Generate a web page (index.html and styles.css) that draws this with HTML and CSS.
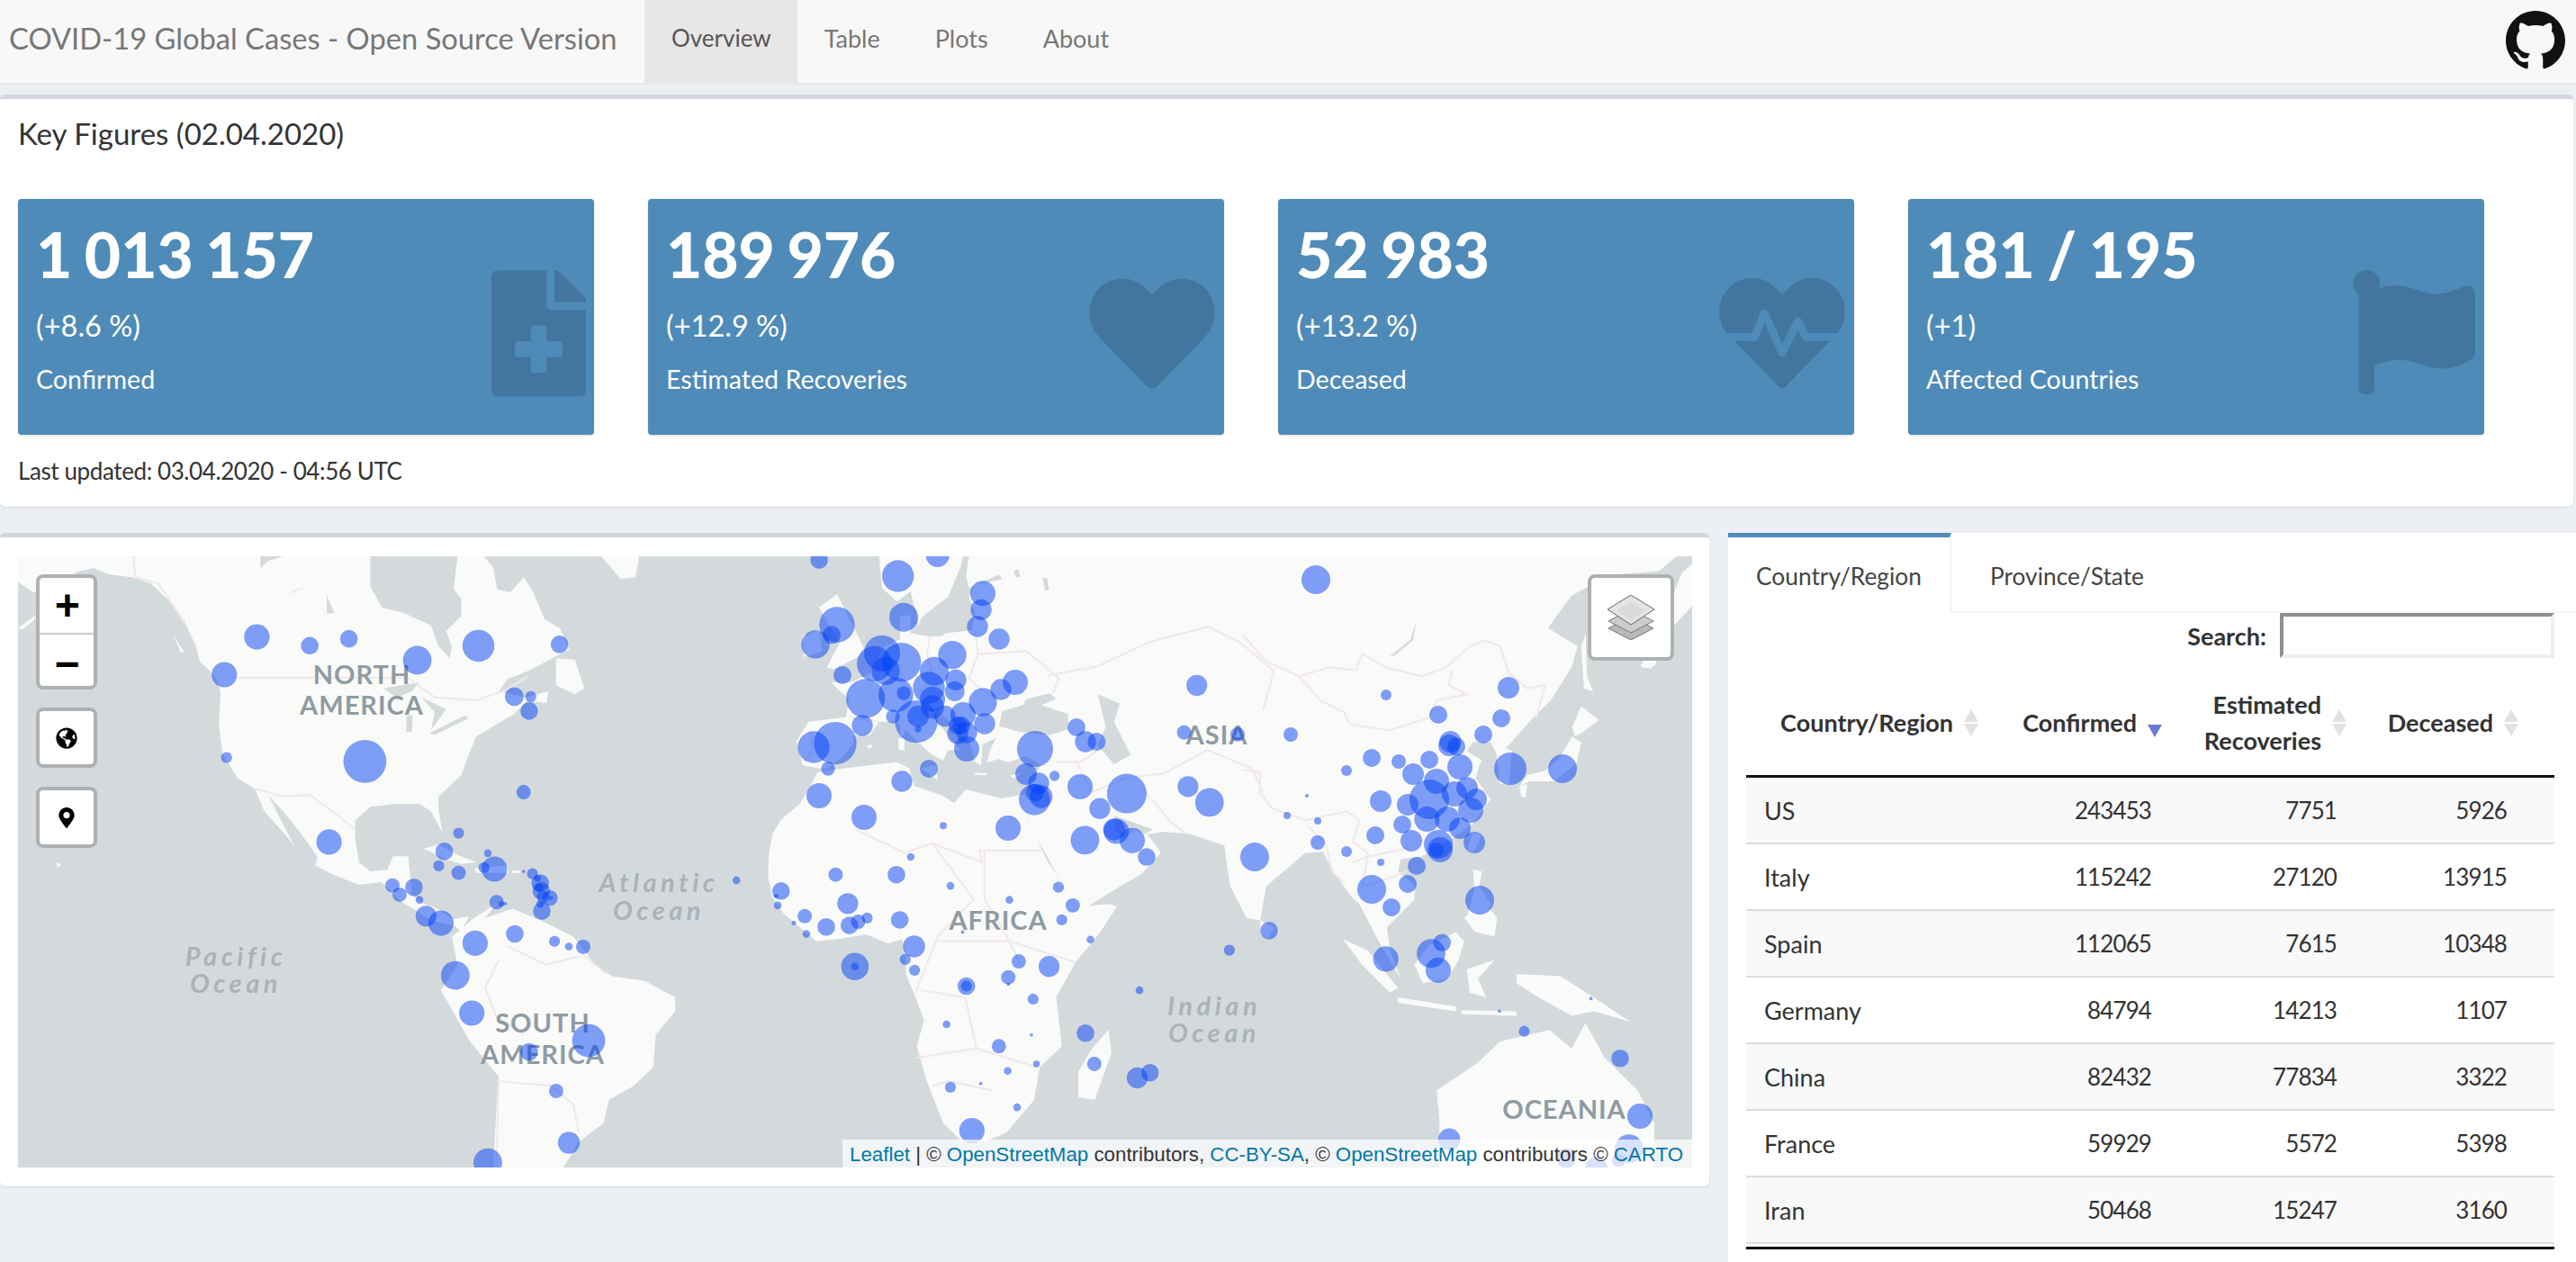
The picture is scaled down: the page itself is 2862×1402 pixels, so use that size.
FILE: index.html
```html
<!DOCTYPE html>
<html lang="en">
  <head>
    <meta charset="UTF-8" />
    <title>COVID-19 Global Cases</title>
    <link rel="stylesheet" href="styles.css">
  </head>

  <body>
    <nav class="navbar">
      <a class="brand">COVID-19 Global Cases - Open Source Version</a>
      <ul class="nav-links">
        <li class="active"><a>Overview</a></li>
        <li><a>Table</a></li>
        <li><a>Plots</a></li>
        <li><a>About</a></li>
      </ul>
      <a class="github">
        <svg viewBox="0 0 16 16"><path d="M8 0C3.58 0 0 3.58 0 8c0 3.54 2.29 6.53 5.47 7.59.4.07.55-.17.55-.38 0-.19-.01-.82-.01-1.49-2.01.37-2.53-.49-2.69-.94-.09-.23-.48-.94-.82-1.13-.28-.15-.68-.52-.01-.53.63-.01 1.08.58 1.23.82.72 1.21 1.87.87 2.33.66.07-.52.28-.87.51-1.07-1.78-.2-3.64-.89-3.64-3.95 0-.87.31-1.59.82-2.15-.08-.2-.36-1.02.08-2.12 0 0 .67-.21 2.2.82.64-.18 1.32-.27 2-.27.68 0 1.36.09 2 .27 1.53-1.04 2.2-.82 2.2-.82.44 1.1.16 1.92.08 2.12.51.56.82 1.27.82 2.15 0 3.07-1.87 3.75-3.65 3.95.29.25.54.73.54 1.48 0 1.07-.01 1.93-.01 2.2 0 .21.15.46.55.38A8.013 8.013 0 0016 8c0-4.42-3.58-8-8-8z"/></svg>
      </a>
    </nav>

    <main class="content">
      <section class="box key-box">
        <h3>Key Figures (02.04.2020)</h3>
        <div class="cards">
          <div class="card">
            <div class="value">1 013 157</div>
            <div class="change">(+8.6 %)</div>
            <div class="label">Confirmed</div>
            <svg class="card-icon icon-doc" viewBox="0 0 384 512"><path d="M377 105L279.1 7c-4.5-4.5-10.6-7-17-7H256v128h128v-6.1c0-6.3-2.5-12.4-7-16.9zm-153 31V0H24C10.7 0 0 10.7 0 24v464c0 13.3 10.7 24 24 24h336c13.3 0 24-10.7 24-24V160H248c-13.2 0-24-10.8-24-24zm64 160v48c0 4.4-3.6 8-8 8h-56v56c0 4.4-3.6 8-8 8h-48c-4.4 0-8-3.6-8-8v-56h-56c-4.4 0-8-3.6-8-8v-48c0-4.4 3.6-8 8-8h56v-56c0-4.4 3.6-8 8-8h48c4.4 0 8 3.6 8 8v56h56c4.4 0 8 3.6 8 8z"/></svg>
          </div>
          <div class="card">
            <div class="value">189 976</div>
            <div class="change">(+12.9 %)</div>
            <div class="label">Estimated Recoveries</div>
            <svg class="card-icon icon-heart" viewBox="0 26 512 456"><path d="M462.3 62.6C407.5 15.9 326 24.3 275.7 76.2L256 96.5l-19.7-20.3C186.1 24.3 104.5 15.9 49.7 62.6c-62.8 53.6-66.1 149.8-9.9 207.9l193.5 199.8c12.5 12.9 32.8 12.9 45.3 0l193.5-199.8c56.3-58.1 53-154.3-9.8-207.9z"/></svg>
          </div>
          <div class="card">
            <div class="value">52 983</div>
            <div class="change">(+13.2 %)</div>
            <div class="label">Deceased</div>
            <svg class="card-icon icon-heart" viewBox="0 32 512 448"><path d="M320.2 243.8l-49.7 99.4c-6 12.1-23.4 11.7-28.9-.6l-56.9-126.3-30 71.7H60.6l182.5 186.5c7.1 7.3 18.6 7.3 25.7 0L451.4 288H342.3l-22.1-44.2zM473.7 73.9l-2.4-2.5c-51.5-52.6-135.8-52.6-187.4 0L256 100l-27.9-28.5c-51.5-52.7-135.9-52.7-187.4 0l-2.4 2.4C-10.4 123.7-12.5 203 31 256h102.4l35.9-86.2c5.4-12.9 23.6-13.2 29.4-.4l58.2 129.3 49-97.9c5.9-11.8 22.7-11.8 28.6 0l27.6 55.2H481c43.5-53 41.4-132.3-7.3-182.1z"/></svg>
          </div>
          <div class="card">
            <div class="value">181 / 195</div>
            <div class="change">(+1)</div>
            <div class="label">Affected Countries</div>
            <svg class="card-icon icon-flag" viewBox="0 0 512 512"><path d="M349.565 98.783C295.978 98.783 251.721 64 184.348 64c-24.955 0-47.309 4.384-68.045 12.013a55.947 55.947 0 0 0 3.586-23.562C118.117 24.015 94.806 1.206 66.338.048 34.345-1.254 8 24.296 8 56c0 19.026 9.497 35.825 24 45.945V488c0 13.255 10.745 24 24 24h16c13.255 0 24-10.745 24-24v-94.4c28.311-12.064 63.582-22.122 114.435-22.122 53.588 0 97.844 34.783 165.217 34.783 48.169 0 86.667-16.294 122.505-40.858C506.84 359.452 512 349.571 512 339.045v-243.1c0-23.393-24.269-38.87-45.485-29.016-34.338 15.948-76.454 31.854-116.95 31.854z"/></svg>
          </div>
        </div>
        <p class="updated">Last updated: 03.04.2020 - 04:56 UTC</p>
      </section>

      <div class="main-row">
        <section class="box map-box">
          <div class="map">
            <svg class="map-svg" viewBox="20 618 1860 679">
              <rect class="sea" x="20" y="618" width="1860" height="679"/>

              <!-- north america, traced at x*.4209 y*.3333 -->
              <g transform="translate(20 618) scale(.4209 .3333)">
                <path class="land" d="M0 0V85L40 120L100 90L160 50L200 40L240 60L300 70L350 90L400 150L440 220L470 300L480 350L520 400L535 450L530 560L540 660L580 740L625 775L650 850L700 920L730 965L690 870L660 795L700 850L745 920L790 1000L785 1030L830 1060L900 1095L960 1085L1010 1150L1050 1180L1090 1215L1150 1230L1170 1250L1190 1200L1150 1210L1100 1170L1065 1155L1040 1130L1030 1000L990 1000L975 1045L930 1050L900 1020L890 940L890 880L930 835L1000 825L1060 825L1090 850L1120 920L1110 840L1110 800L1170 730L1190 660L1210 600L1250 570L1310 525L1345 480L1395 490L1400 450L1340 470L1270 450L1290 410L1350 380L1455 310L1430 240L1390 210L1360 120L1335 70L1300 120L1265 110L1255 40L1230 0Z"/>
                <path class="sea" d="M930 0L930 100L960 170L1020 190L1090 230L1110 300L1140 340L1145 300L1130 250L1170 200L1170 140L1150 110L1160 0Z"/>
                <path class="sea" d="M640 40L660 15L700 0H640Z"/>
                <path class="sea" d="M965 440L1060 420L1040 450L1000 470Z"/>
                <path class="sea" d="M1025 530H1042L1040 585H1025Z"/>
                <path class="sea" d="M1065 470L1130 510L1090 580L1100 520Z"/>
                <path class="sea" d="M1085 590L1180 530L1190 540L1100 595Z"/>
                <path class="sea" d="M700 130L760 100L735 115Z"/>
                <path class="sea" d="M815 130L835 190L815 190Z"/>
                <path class="land" d="M0 240L20 220L50 195L40 215L10 245Z"/>
                <path class="land" d="M410 265L440 320L430 320Z"/>
                <path class="land" d="M1420 340L1470 345L1495 440L1470 460L1420 430Z"/>
                <path class="land" d="M1070 975L1110 960L1160 995L1210 1020L1170 1025L1130 1010L1090 985Z"/>
                <path class="land" d="M1205 1040L1290 1030L1295 1055L1210 1055Z"/>
                <path class="land" d="M1305 1046L1325 1048L1325 1056L1305 1056Z"/>
                <path class="land" d="M100 1020L115 1028L105 1036Z"/>
                <path class="land" d="M1540 0H1640L1630 70L1590 75L1560 30Z"/>
                <path class="border" d="M580 405H1030L1100 470L1210 480L1290 445L1345 400"/>
                <path class="border" d="M625 775L700 800L770 795L830 850L890 910"/>
                <path class="border" d="M305 0L310 70L370 90L440 220"/>
              </g>

              <!-- south america, x*.6124 y*.5179 -->
              <g transform="translate(0 590) scale(.6124 .5179)">
                <path class="land" d="M820 870L860 830L900 800L880 830L930 810L990 840L1040 870L1080 930L1110 955L1170 965L1225 1000L1225 1030L1190 1080L1185 1150L1150 1190L1105 1220L1095 1270L1050 1310L1035 1340L1020 1370H895L900 1250L905 1170L880 1135L850 1090L800 985L830 930Z"/>
                <path class="border" d="M905 920L880 980L900 1040L950 1080"/>
                <path class="border" d="M900 1180L1000 1190L1040 1230L1050 1290"/>
                <path class="border" d="M905 1180L900 1370"/>
                <path class="border" d="M920 890L990 930L1060 910L1100 950"/>
              </g>

              <!-- europe, scandinavia and the mediterranean at 3x -->
              <g transform="translate(820 620) scale(.3333)">
                <path class="land" d="M265 700L215 690L195 610L235 545L360 530L370 470L310 415L375 415L440 385L480 300L540 270L540 195L575 190L575 250L640 260L900 260V700L600 720Z"/>
                <path class="land" d="M470 -10L480 100L530 145L575 110L605 235L640 220L650 170L710 130L760 -10Z"/>
              </g>

              <!-- africa and asia, x*.6124 y*.5179 -->
              <g transform="translate(950 590) scale(.6124 .5179)">
                <path class="land" d="M-68 517L-80 545L-100 585L-135 620L-150 650L-156 690L-158 740L-150 785L-130 820L-100 850L-70 880L-30 875L20 865L60 885L85 875L92 905L92 950L110 1000L125 1050L112 1105L130 1180L160 1270L195 1310L235 1310L275 1290L325 1220L335 1150L375 1105L365 1000L400 925L445 860L475 805L460 800L410 805L400 790L370 745L345 700L315 620L310 595L299 566L266 573L201 554L179 583L158 566L108 547L98 508L76 496L-16 508Z"/>
                <path class="land" d="M310 595L320 640L340 680L370 745L400 795L415 810L470 770L520 735L555 690L530 650L560 645L610 650L670 675L680 760L710 830L735 835L746 762L816 691L849 688L871 736L903 788L915 800L950 880L990 960L970 900L965 850L990 820L1015 790L1015 760L985 730L990 704L1028 698L1077 665L1121 627L1153 575L1126 530L1132 504L1137 492L1110 472L1121 453L1153 453L1164 479L1170 543L1186 543L1192 472L1181 466L1224 408L1262 363L1300 292L1311 247L1257 208L1300 138L1333 118L1382 93L1458 86L1491 54H130L200 450Z"/>
                <path class="land" d="M1519 70L1519 160L1480 210L1450 290L1425 290L1465 190L1500 90Z"/>
                <path class="sea" d="M470 610L540 640L525 650L505 640L490 660L470 640Z"/>
                <path class="sea" d="M440 350L480 370L470 410L500 480L470 500L440 460L455 420Z"/>
                <path class="sea" d="M288 85L296 82L300 98L292 100Z"/>
                <path class="sea" d="M340 100L348 100L352 125L345 128Z"/>
                <path class="land" d="M460 1070L465 1120L435 1220L405 1215L405 1160L430 1110Z"/>
                <path class="land" d="M735 835L760 850L750 875L735 865Z"/>
                <path class="land" d="M885 875L930 900L985 980L970 990L920 930Z"/>
                <path class="land" d="M985 1000L1090 1020L1090 1030L985 1012Z"/>
                <path class="land" d="M1015 930L1040 890L1090 860L1105 880L1095 920L1075 960L1030 970Z"/>
                <path class="land" d="M1110 940L1160 920L1130 960L1145 1000L1115 990Z"/>
                <path class="land" d="M1105 830L1140 790L1165 830L1160 870L1125 860Z"/>
                <path class="land" d="M1200 950L1280 955L1340 1000L1405 1052L1340 1030L1300 1040L1240 1000L1200 970Z"/>
                <path class="land" d="M1100 1028L1200 1030L1200 1040L1100 1036Z"/>
                <path class="land" d="M1055 1200L1130 1140L1170 1095L1260 1070L1300 1110L1325 1055L1360 1130L1420 1200L1450 1270L1450 1370H1060L1060 1260Z"/>
                <path class="border" d="M0 640L90 690L140 670L215 790L150 870L110 990"/>
                <path class="border" d="M140 670L230 710L225 685L340 685"/>
                <path class="border" d="M235 685V790L280 880L300 930"/>
                <path class="border" d="M110 1130L220 1110L330 1150"/>
                <path class="border" d="M150 880L280 880L400 925"/>
                <path class="border" d="M220 1110L200 1000L120 985"/>
                <path class="border" d="M250 1200L170 1180L140 1190"/>
                <path class="border" d="M350 310L440 290L530 240L640 205L700 240L760 300L740 385"/>
                <path class="border" d="M400 490L430 560L490 530L560 520L640 470L720 510L740 560"/>
                <path class="border" d="M520 550L570 620L600 650"/>
              </g>

              <!-- seas on top of europe, 3x again -->
              <g transform="translate(820 620) scale(.3333)">
                <path class="sea" d="M262 712L300 700L350 660L385 620L385 590L440 590L470 545L530 545L575 590L640 650L683 675L700 640L740 640L700 590L650 530L640 505L660 500L700 540L770 610L790 680L810 690L815 620L860 600L840 640L830 680L870 670L900 680L960 660L1010 690L985 730L960 790L940 790L880 800L760 770L720 815L680 790L590 760L570 700L530 680L360 700Z"/>
                <path class="sea" d="M870 560L880 510L950 490L960 470L1040 450L1060 470L1010 490L1100 520L1100 570L1040 590L940 580Z"/>
                <path class="sea" d="M575 250L600 235L610 200L640 175L700 130L745 20L750 -10L770 -10L760 60L770 100L870 55L880 70L790 90L770 130L790 180L780 240L700 250L640 262Z"/>
                <path class="land" d="M610 700L660 690L665 740Z"/>
                <path class="land" d="M535 600H555V640H535Z"/>
                <path class="land" d="M540 555H555V590H540Z"/>
                <path class="land" d="M430 625L445 622L448 632L432 634Z"/>
                <path class="land" d="M790 715L830 718L830 724L790 722Z"/>
                <path class="land" d="M905 725L945 715L925 735Z"/>
                <path class="land" d="M270 165L330 120L370 200L420 300L400 330L320 370L295 365L340 280L300 220Z"/>
                <path class="land" d="M215 260L270 240L280 310L220 330Z"/>
                <path class="border" d="M640 260L630 320L650 400L600 450"/>
                <path class="border" d="M790 240L800 320L770 400L800 430L860 470"/>
                <path class="border" d="M800 320L960 310L1070 400L1050 450"/>
                <path class="border" d="M240 570L250 640L220 680"/>
                <path class="border" d="M370 530L470 545"/>
                <path class="border" d="M1060 680L1140 680L1200 640"/>
              </g>

              <!-- east asia, 3x -->
              <g transform="translate(1380 618) scale(.3333)">
                <path class="sea" d="M580 220L560 280L490 335L510 330L570 280Z"/>
                <path class="land" d="M1145 260L1150 400L1170 450L1140 440L1130 300Z"/>
                <path class="land" d="M1100 570L1130 500L1190 545L1130 590L1110 600Z"/>
                <path class="land" d="M1100 600L1130 620L1115 690L1040 750L960 750L925 765L950 730L1010 715L1060 670Z"/>
                <path class="land" d="M925 765L950 760L945 805L930 800Z"/>
                <path class="land" d="M770 920L800 930L770 990L750 980Z"/>
                <path class="land" d="M770 1045L800 1050L790 1100L830 1160L800 1200L750 1200L775 1110Z"/>
                <path class="land" d="M1330 370L1370 340L1365 375Z"/>
                <path class="border" d="M0 260L80 350L190 400L290 370L380 380L400 325L480 370L600 400L680 370L760 300L810 280L860 300L890 390L950 440L1010 430L980 540"/>
                <path class="border" d="M190 400L260 480L340 520L360 560L490 580L620 540L650 480L750 460L690 430L700 380"/>
                <path class="border" d="M0 710L60 720L60 790L100 840L210 880L350 850L390 880L370 950L430 1000L560 970"/>
                <path class="border" d="M370 1020L420 1000L400 1100L470 1080L550 1050"/>
                <path class="border" d="M220 900L280 960L300 1050L340 1090"/>
              </g>

              <text class="continent" x="402" y="760">NORTH</text>
              <text class="continent" x="402" y="794">AMERICA</text>
              <text class="continent" x="603" y="1147">SOUTH</text>
              <text class="continent" x="603" y="1182">AMERICA</text>
              <text class="continent" x="1109" y="1033">AFRICA</text>
              <text class="continent" x="1352" y="827">ASIA</text>
              <text class="continent" x="1738" y="1243">OCEANIA</text>
              <text class="ocean" x="262" y="1073">Pacific</text>
              <text class="ocean" x="262" y="1103">Ocean</text>
              <text class="ocean" x="732" y="991">Atlantic</text>
              <text class="ocean" x="732" y="1022">Ocean</text>
              <text class="ocean" x="1349" y="1128">Indian</text>
              <text class="ocean" x="1349" y="1158">Ocean</text>

              <g id="dots"></g>
            </svg>

            <div class="map-control zoom-control">
              <a>+</a>
              <a>&minus;</a>
            </div>
            <div class="map-control globe-control">
              <svg viewBox="0 0 496 512"><path d="M248 8C111.03 8 0 119.03 0 256s111.03 248 248 248 248-111.03 248-248S384.97 8 248 8zm82.29 357.6c-3.9 3.88-7.99 7.95-11.31 11.28-2.99 3-5.1 6.7-6.17 10.71-1.51 5.66-2.73 11.38-4.77 16.87l-17.39 46.85c-13.76 3-28 4.69-42.65 4.69v-27.38c1.69-12.62-7.64-36.26-22.63-51.25-6-6-9.37-14.14-9.37-22.63v-32.01c0-11.64-6.27-22.34-16.46-27.97-14.37-7.95-34.81-19.06-48.81-26.11-11.48-5.78-22.1-13.14-31.65-21.75l-.8-.72a114.792 114.792 0 0 1-18.06-20.74c-9.38-13.77-24.66-36.42-34.59-51.14 20.47-45.5 57.36-82.04 103.2-101.89l24.01 12.01C203.48 89.74 216 82.01 216 70.11v-11.3c7.99-1.29 16.12-2.11 24.39-2.42l28.3 28.3c6.25 6.25 6.25 16.38 0 22.63L264 112l-10.34 10.34c-3.12 3.12-3.12 8.19 0 11.31l4.69 4.69c3.12 3.12 3.12 8.19 0 11.31l-8 8a8.008 8.008 0 0 1-5.66 2.34h-8.99c-2.08 0-4.08.81-5.58 2.27l-9.92 9.65a8.008 8.008 0 0 0-1.58 9.31l15.59 31.19c2.66 5.32-1.21 11.58-7.15 11.58h-5.64c-1.93 0-3.79-.7-5.24-1.96l-9.28-8.06a16.017 16.017 0 0 0-15.55-3.1l-31.17 10.39a11.95 11.95 0 0 0-8.17 11.34c0 4.53 2.56 8.66 6.61 10.69l11.08 5.54c9.41 4.71 19.79 7.16 30.31 7.16s22.59 27.29 32 32h66.75c8.49 0 16.62 3.37 22.63 9.37l13.69 13.69a30.503 30.503 0 0 1 8.93 21.57 46.536 46.536 0 0 1-13.72 32.98zM417 274.25c-5.79-1.45-10.84-5-14.15-9.97l-17.98-26.97a23.97 23.97 0 0 1 0-26.62l19.59-29.38c2.32-3.47 5.5-6.29 9.24-8.15l12.98-6.49C440.2 193.59 448 223.87 448 256c0 8.67-.74 17.16-1.82 25.54L417 274.25z"/></svg>
            </div>
            <div class="map-control pin-control">
              <svg viewBox="0 0 384 512"><path d="M172.268 501.67C26.97 291.031 0 260.697 0 192 0 85.961 85.961 0 192 0s192 85.961 192 192c0 68.697-26.97 99.031-172.268 309.67-9.535 13.774-29.93 13.773-39.464 0zM192 272c44.183 0 80-35.817 80-80s-35.817-80-80-80-80 35.817-80 80 35.817 80 80 80z"/></svg>
            </div>
            <div class="map-control layers-control">
              <svg viewBox="0 0 52 50">
                <path fill="#b9b9b9" stroke="#777" d="M26 24L51 37L26 50L1 37Z"/>
                <path fill="#cdcdcd" stroke="#777" d="M26 16L51 29L26 42L1 29Z"/>
                <path fill="#e4e4e4" stroke="#666" d="M26 0L52 16L26 33L0 16Z"/>
                <path fill="#dadada" d="M26 8L42 17L26 28L10 17Z"/>
              </svg>
            </div>
            <div class="attribution">
              <a>Leaflet</a> | &copy; <a>OpenStreetMap</a> contributors, <a>CC-BY-SA</a>, &copy; <a>OpenStreetMap</a> contributors &copy; <a>CARTO</a>
            </div>
          </div>
        </section>

        <section class="side-panel">
          <div class="tabs">
            <div class="tab active">Country/Region</div>
            <div class="tab">Province/State</div>
          </div>
          <div class="table-wrap">
            <div class="search-row">
              <label for="search">Search:</label>
              <input type="search" id="search" />
            </div>
            <table class="cases">
              <colgroup>
                <col class="col-country" />
                <col class="col-confirmed" />
                <col class="col-recovered" />
                <col class="col-deceased" />
              </colgroup>
              <thead>
                <tr>
                  <th><div class="th-inner">Country/Region<span class="sort"></span></div></th>
                  <th><div class="th-inner">Confirmed<span class="sort sort-desc"></span></div></th>
                  <th><div class="th-inner">Estimated<br>Recoveries<span class="sort"></span></div></th>
                  <th><div class="th-inner">Deceased<span class="sort"></span></div></th>
                </tr>
              </thead>
              <tbody>
                <tr><td>US</td><td>243453</td><td>7751</td><td>5926</td></tr>
                <tr><td>Italy</td><td>115242</td><td>27120</td><td>13915</td></tr>
                <tr><td>Spain</td><td>112065</td><td>7615</td><td>10348</td></tr>
                <tr><td>Germany</td><td>84794</td><td>14213</td><td>1107</td></tr>
                <tr><td>China</td><td>82432</td><td>77834</td><td>3322</td></tr>
                <tr><td>France</td><td>59929</td><td>5572</td><td>5398</td></tr>
                <tr><td>Iran</td><td>50468</td><td>15247</td><td>3160</td></tr>
              </tbody>
            </table>
            <div class="table-end"></div>
          </div>
        </section>
      </div>
    </main>

    <script src="map.js"></script>
  </body>
</html>
```

FILE: styles.css
```css
* {
  margin: 0;
  padding: 0;
  box-sizing: border-box;
}

html,
body {
  height: 100%;
}

body {
  font-family: Lato, "Noto Sans", sans-serif;
  background-color: #ecf0f5;
  color: #333;
  display: flex;
  flex-direction: column;
  overflow: hidden;
}

/* navbar */
.navbar {
  display: flex;
  align-items: stretch;
  height: 94px;
  flex-shrink: 0;
  background-color: #f8f8f8;
  border-bottom: 2px solid #e7e7e7;
}

.brand {
  width: 716px;
  padding: 0 0 8px 10px;
  display: flex;
  align-items: center;
  font-size: 32.7px;
  color: #777;
}

.nav-links {
  display: flex;
  list-style: none;
  font-size: 27px;
  color: #777;
}

.nav-links li {
  display: flex;
  align-items: center;
  padding: 0 31px 8px 30px;
}

.nav-links li.active {
  padding: 0 29px 8px 30px;
  font-size: 26px;
  background-color: #e7e7e7;
  color: #555;
}

.github {
  margin-left: auto;
  margin-right: 12px;
  padding-top: 12px;
}

.github svg {
  display: block;
  width: 66px;
  height: 66px;
  fill: #111;
}

/* boxes */
.content {
  flex: 1;
  display: flex;
  flex-direction: column;
}

.box {
  background-color: #fff;
  border-top: 5px solid #d2d6de;
  border-radius: 6px;
  box-shadow: 0 1px 2px rgba(0, 0, 0, 0.1);
}

.key-box {
  margin: 11px 3px 0 0;
  height: 458px;
  padding: 18px 20px 0;
}

.key-box h3 {
  font-size: 33px;
  font-weight: 400;
  line-height: 40px;
  color: #333;
}

.cards {
  display: flex;
  gap: 60px;
  margin-top: 53px;
}

.card {
  position: relative;
  width: 640px;
  height: 262px;
  padding: 23px 0 0 20px;
  background-color: #4f8bb8;
  border-radius: 4px;
  box-shadow: 0 1px 2px rgba(0, 0, 0, 0.15);
  color: #fff;
}

.value {
  font-size: 69.5px;
  font-weight: 900;
  line-height: 76px;
  word-spacing: -3px;
}

.change {
  margin-top: 22px;
  font-size: 32.5px;
  line-height: 40px;
}

.label {
  margin-top: 21px;
  font-size: 28.6px;
  line-height: 36px;
}

.card-icon {
  position: absolute;
  fill: #43769e;
}

.icon-doc {
  top: 79px;
  right: 9px;
  width: 105px;
  height: 141px;
}

.icon-heart {
  top: 87px;
  right: 10px;
  width: 140px;
  height: 124px;
}

.icon-flag {
  top: 78px;
  right: 10px;
  width: 138px;
  height: 140px;
}

.updated {
  margin-top: 22px;
  font-size: 26px;
  letter-spacing: -0.4px;
  line-height: 36px;
}

.main-row {
  flex: 1;
  display: flex;
  align-items: flex-start;
  margin-top: 29px;
}

.map-box {
  width: 1899px;
  height: 726px;
  padding: 21px 19px 20px 20px;
  flex-shrink: 0;
}

.map {
  position: relative;
  width: 1860px;
  height: 679px;
  overflow: hidden;
}

.map-svg {
  display: block;
  width: 100%;
  height: 100%;
}

.sea {
  fill: #d4dadc;
}

.land {
  fill: #fafaf8;
}

.border {
  fill: none;
  stroke: #f1e8e8;
  stroke-width: 2;
  vector-effect: non-scaling-stroke;
}

.dot {
  fill: #0040f5;
  fill-opacity: 0.5;
}

.continent {
  font-size: 29px;
  font-weight: 700;
  fill: #8f9ba3;
  text-anchor: middle;
  letter-spacing: 1px;
}

.ocean {
  font-size: 29px;
  font-style: italic;
  font-weight: 700;
  fill: #abb2b9;
  text-anchor: middle;
  letter-spacing: 4.5px;
}

/* leaflet controls */
.map-control {
  position: absolute;
  left: 20px;
  width: 68px;
  background-color: #fff;
  border: 4px solid #aeb1b3;
  border-radius: 8px;
  display: flex;
  align-items: center;
  justify-content: center;
}

.map-control svg {
  display: block;
}

.zoom-control {
  top: 20px;
  height: 128px;
  flex-direction: column;
  font-family: "Liberation Mono", monospace;
  font-weight: 700;
  font-size: 48px;
  color: #000;
}

.zoom-control a {
  flex: 1;
  width: 100%;
  padding: 9px 0 0 2px;
  display: flex;
  align-items: center;
  justify-content: center;
}

.zoom-control a:first-child {
  padding-top: 12px;
  border-bottom: 2px solid #ccc;
}

.globe-control {
  top: 168px;
  height: 67px;
}

.globe-control svg {
  width: 24px;
  height: 24px;
}

.pin-control {
  top: 256px;
  height: 68px;
}

.pin-control svg {
  width: 18px;
  height: 23px;
}

.layers-control {
  top: 20px;
  left: auto;
  right: 20px;
  width: 96px;
  height: 96px;
}

.layers-control svg {
  width: 52px;
  height: 50px;
}

.attribution {
  position: absolute;
  right: 0;
  bottom: 0;
  height: 31px;
  padding: 1px 10px 0 8px;
  background-color: rgba(255, 255, 255, 0.7);
  font-family: "Liberation Sans", Arial, sans-serif;
  font-size: 22.3px;
  line-height: 31px;
  color: #333;
  white-space: nowrap;
}

.attribution a {
  color: #0078a8;
}

/* table panel */
.side-panel {
  flex: 1;
  margin-left: 21px;
  align-self: stretch;
  background-color: #fff;
}

.tabs {
  display: flex;
  height: 89px;
  border-bottom: 2px solid #f4f4f4;
  font-size: 26.3px;
  color: #444;
}

.tab {
  display: flex;
  align-items: center;
  padding: 9px 43px 0;
  height: 87px;
}

.tab.active {
  width: 248px;
  justify-content: center;
  padding: 2px 0 0;
  height: 89px;
  background-color: #fff;
  border-top: 5px solid #4f8bb8;
  border-right: 2px solid #f4f4f4;
}

.table-wrap {
  padding: 0 24px 0 20px;
}

.search-row {
  display: flex;
  justify-content: flex-end;
  align-items: center;
  gap: 15px;
  font-size: 27px;
  font-weight: 700;
}

.search-row input {
  width: 305px;
  height: 50px;
  border-style: solid;
  border-width: 4px;
  border-color: #8f8f8f #eee #eee #8f8f8f;
  outline: none;
}

.cases {
  width: 100%;
  table-layout: fixed;
  border-collapse: separate;
  border-spacing: 0;
  font-size: 27px;
}

.col-country {
  width: 266px;
}

.col-confirmed {
  width: 204px;
}

.col-recovered {
  width: 206px;
}

.col-deceased {
  width: 222px;
}

.cases th {
  height: 133px;
  padding-top: 14px;
  border-bottom: 3px solid #111;
  font-weight: 700;
  text-align: right;
}

.th-inner {
  position: relative;
  padding-right: 29px;
  line-height: 40px;
}

.cases th:nth-child(1) .th-inner {
  margin-right: 7px;
}

.cases th:nth-child(2) .th-inner {
  margin-right: 7px;
}

.cases th:nth-child(3) .th-inner {
  margin-right: 8px;
}

.cases th:nth-child(4) .th-inner {
  margin-right: 39px;
}

.sort {
  position: absolute;
  right: 0;
  top: 50%;
  width: 17px;
  height: 30px;
  margin-top: -15px;
}

.sort::before,
.sort::after {
  content: "";
  position: absolute;
  left: 0;
  border-left: 8.5px solid transparent;
  border-right: 8.5px solid transparent;
}

.sort::before {
  top: 0;
  border-bottom: 14px solid #e2e2e2;
}

.sort::after {
  bottom: 0;
  border-top: 14px solid #e2e2e2;
}

.sort-desc::before {
  display: none;
}

.sort-desc::after {
  bottom: -1px;
  border-top-color: #6a7bd6;
}

.cases td {
  height: 74px;
  border-bottom: 2px solid #ddd;
  font-size: 26px;
  letter-spacing: -0.9px;
  text-align: right;
  color: #333;
}

.cases td:first-child {
  padding-left: 20px;
  font-size: 27px;
  letter-spacing: 0;
  text-align: left;
}

.cases td:nth-child(2) {
  padding-right: 20px;
}

.cases td:nth-child(3) {
  padding-right: 20px;
}

.cases td:nth-child(4) {
  padding-right: 53px;
}

.cases tbody tr:nth-child(odd) td {
  background-color: #f9f9f9;
}

.table-end {
  margin-top: 3px;
  border-top: 3px solid #111;
}
```

FILE: map.js
```js
// dots as read off crops of the map: x, y, width in crop pixels
const crops = [
  {
    // the americas
    ox: 0, oy: 590, sx: 0.6124, sy: 0.5179,
    dots: [
      [466,227,46],[562,246,32],[633,231,32],[757,277,52],[868,246,58],[1015,243,32],[407,308,46],
      [933,355,34],[963,355,20],[960,386,32],[662,494,78],[411,486,20],[950,560,26],[597,667,46],
      [832,648,20],[806,687,32],[885,691,14],[796,718,20],[832,733,26],[897,725,46],[878,722,20],
      [950,730,6],[966,735,20],[980,755,32],[975,745,12],[982,772,32],[978,765,16],[985,785,22],
      [998,787,28],[999,787,8],[980,800,14],[983,815,32],[901,796,26],[910,800,10],[917,799,6],
      [712,760,26],[725,780,26],[751,764,32],[761,791,14],[773,826,38],[800,841,46],[862,884,46],
      [934,864,32],[1006,880,20],[1032,891,14],[1058,892,26],[826,953,52],[856,1034,46],
      [1068,1093,60],[960,1117,32],[1009,1201,26],[1032,1312,40],[885,1355,52],[1336,749,14],
      [1486,62,32],
      // west africa
      [1417,772,32],[1408,783,8],[1411,803,14],[1460,826,26],[1440,841,8],[1463,864,14],
      [1499,849,32],[1538,799,38],[1516,737,26],[1541,846,32],[1557,838,26],[1551,934,50],[1551,934,14]
    ]
  },
  {
    // europe and the levant
    ox: 820, oy: 620, sx: 1 / 3, sy: 1 / 3,
    dots: [
      [533,60,106],[665,-10,80],[552,197,96],[816,118,84],[810,172,70],[798,228,70],[870,270,70],
      [330,222,118],[258,288,94],[312,256,60],[480,317,120],[455,352,118],[492,376,94],[545,347,130],
      [714,323,94],[654,377,96],[348,390,60],[726,406,70],[722,444,66],[636,432,106],[648,470,84],
      [526,456,116],[552,450,46],[425,468,130],[594,545,142],[600,527,72],[648,496,78],[600,570,22],
      [690,527,70],[516,528,46],[414,558,70],[816,480,94],[876,438,70],[924,414,84],[750,522,84],
      [732,558,60],[744,558,60],[732,585,70],[762,582,70],[822,552,70],[762,636,84],[324,617,142],
      [252,630,106],[300,702,46],[270,792,84],[420,864,84],[546,744,70],[636,702,60],[990,636,120],
      [960,720,72],[1002,750,70],[988,805,104],[990,782,60],[1010,795,76],[1055,726,34],[1140,762,84],
      [1128,564,60],[1158,612,70],[1195,612,60],[900,900,84],[684,892,24]
    ]
  },
  {
    // middle east, africa, indonesia, australia
    ox: 950, oy: 590, sx: 0.6124, sy: 0.5179,
    dots: [
      [493,563,72],[444,595,38],[417,663,52],[474,644,46],[470,640,40],[503,664,46],[529,699,32],
      [620,331,38],[597,432,26],[694,436,26],[604,548,38],[643,582,52],[369,764,20],[395,803,26],
      [375,834,20],[427,876,14],[173,761,14],[101,699,14],[75,737,32],[81,834,32],[280,791,14],
      [195,860,6],[107,891,40],[91,919,20],[108,942,20],[22,830,20],[297,923,26],[352,934,38],
      [278,957,26],[278,972,6],[202,976,32],[202,976,20],[323,1004,20],[166,1058,14],[320,1081,6],
      [261,1105,26],[277,1158,14],[329,1143,12],[418,1077,32],[434,1143,26],[512,1173,38],[535,1162,32],
      [173,1193,20],[228,1185,6],[294,1236,14],[212,1286,46],[751,857,32],[679,899,20],[516,985,14],
      [963,918,46],[1045,906,52],[1065,883,32],[1058,942,46],[1335,1003,6],[1169,1030,6],[1214,1073,20],
      [1388,1131,32],[1424,1255,46],[1078,1305,40],[1404,1325,52],[1290,1345,36],[1345,1366,40],[1385,1350,24]
    ]
  },
  {
    // east asia
    ox: 1380, oy: 618, sx: 1 / 3, sy: 1 / 3,
    dots: [
      [246,78,96],[480,462,36],[888,438,72],[654,528,60],[864,540,60],[804,594,60],[162,594,48],
      [694,618,72],[690,630,72],[714,634,60],[432,672,60],[522,684,48],[624,678,60],[348,714,36],
      [570,726,72],[726,702,84],[894,708,108],[1068,708,96],[648,750,84],[624,810,132],[708,792,84],
      [750,772,72],[780,810,72],[762,846,84],[462,816,72],[552,828,72],[216,798,12],[616,876,84],
      [684,876,84],[534,894,60],[726,906,72],[150,864,24],[252,882,24],[444,930,60],[564,948,72],
      [252,954,48],[654,960,96],[660,978,84],[648,978,48],[774,954,72],[348,984,36],[582,1032,60],
      [42,1002,96],[462,1020,24],[432,1110,96],[552,1092,60],[792,1146,96],[498,1170,60]
    ]
  }
];

const dotLayer = document.getElementById("dots");

crops.forEach((crop) => {
  crop.dots.forEach(([x, y, w]) => {
    const dot = document.createElementNS("http://www.w3.org/2000/svg", "circle");
    dot.setAttribute("class", "dot");
    dot.setAttribute("cx", crop.ox + x * crop.sx);
    dot.setAttribute("cy", crop.oy + y * crop.sy);
    dot.setAttribute("r", (w / 2) * crop.sx);
    dotLayer.appendChild(dot);
  });
});
```
